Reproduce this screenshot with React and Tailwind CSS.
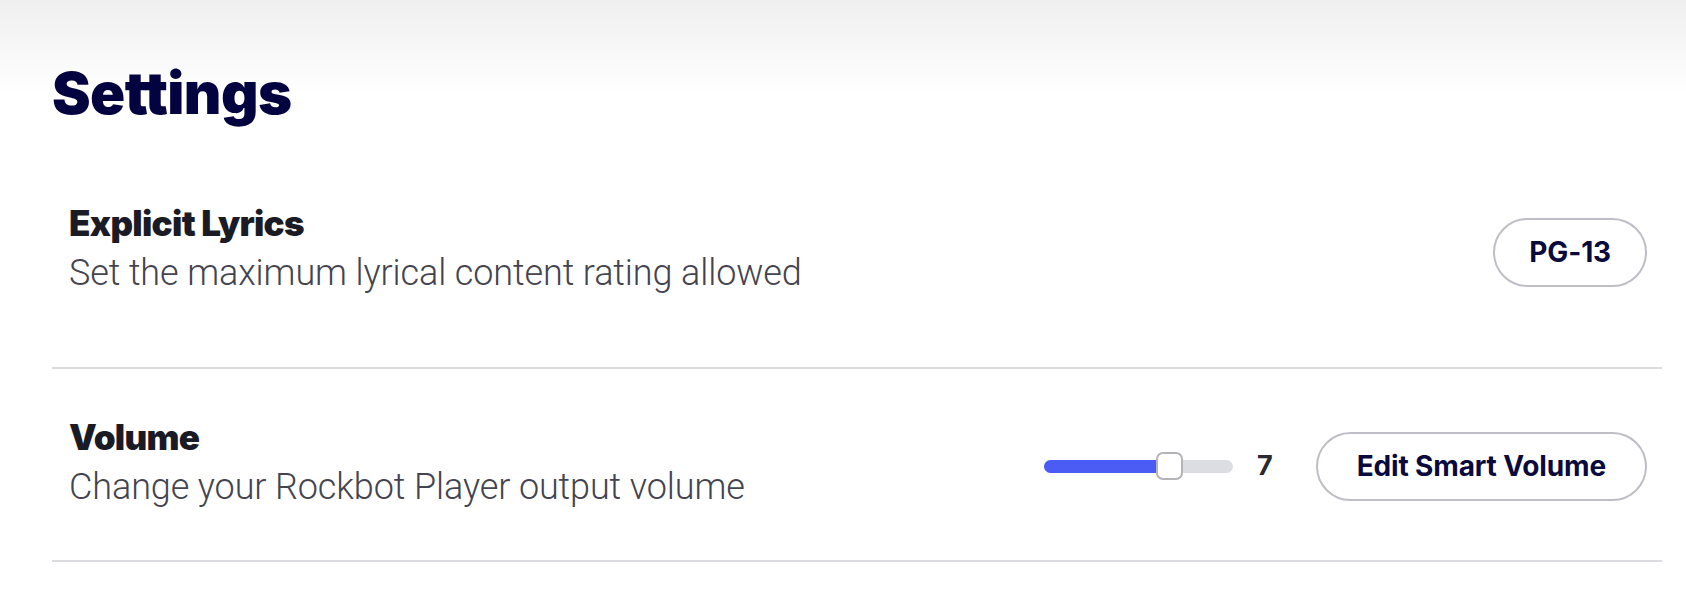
import React from "react";

function Row({ title, subtitle, children, className }) {
  return (
    <div className={"flex items-center justify-between border-b-2 border-[#dcdce0] pl-[17px] pr-[15px] " + className}>
      <div className="flex flex-col">
        <div className="font-['Inter'] text-[35px] leading-[40px] font-black tracking-[-0.02em] text-[#1b1b26]">{title}</div>
        <div className="mt-2 font-['Roboto'] text-[36px] leading-[44px] font-light tracking-[-0.003em] text-[#44444f]">{subtitle}</div>
      </div>
      <div className="mt-[6px] flex items-center">{children}</div>
    </div>
  );
}

function PillButton({ children, className }) {
  return (
    <button className={"flex h-[69px] items-center rounded-full border-2 border-[#bebec6] bg-white font-['Inter'] text-[28px] font-bold tracking-[-0.005em] text-[#0a0a3c] " + className}>
      {children}
    </button>
  );
}

function Slider({ value, max }) {
  const pct = (value / max) * 100;
  return (
    <div className="relative h-[13px] w-[189px] rounded-full bg-[#dcdce3]">
      <div className="h-full rounded-full bg-[#4b5cf5]" style={{ width: `calc(${pct}% - 10px)` }} />
      <div
        className="absolute top-1/2 h-[28px] w-[27px] -translate-y-1/2 rounded-[7px] border-2 border-[#b3b3b8] bg-white"
        style={{ left: `calc(${pct}% - 20px)` }}
      />
    </div>
  );
}

export default function App() {
  return (
    <div className="min-h-[595px] w-full bg-[linear-gradient(to_bottom,#efefef_0px,#ffffff_95px)]">
      <div className="pl-[52px] pr-[24px] pt-[64px]">
        <h1 className="font-['Inter'] text-[58px] leading-[58px] font-black tracking-[-0.01em] text-[#03033f]">Settings</h1>
        <Row
          title="Explicit Lyrics"
          subtitle="Set the maximum lyrical content rating allowed"
          className="pt-[81px] pb-[72px]"
        >
          <PillButton className="px-[34px]">PG-13</PillButton>
        </Row>
        <Row
          title="Volume"
          subtitle="Change your Rockbot Player output volume"
          className="pt-[48px] pb-[51px]"
        >
          <Slider value={7} max={10} />
          <span className="ml-[24px] font-['Inter'] text-[27px] font-bold text-[#2a2a30]">7</span>
          <div className="ml-[43px]">
            <PillButton className="px-[39px]">Edit Smart Volume</PillButton>
          </div>
        </Row>
      </div>
    </div>
  );
}
